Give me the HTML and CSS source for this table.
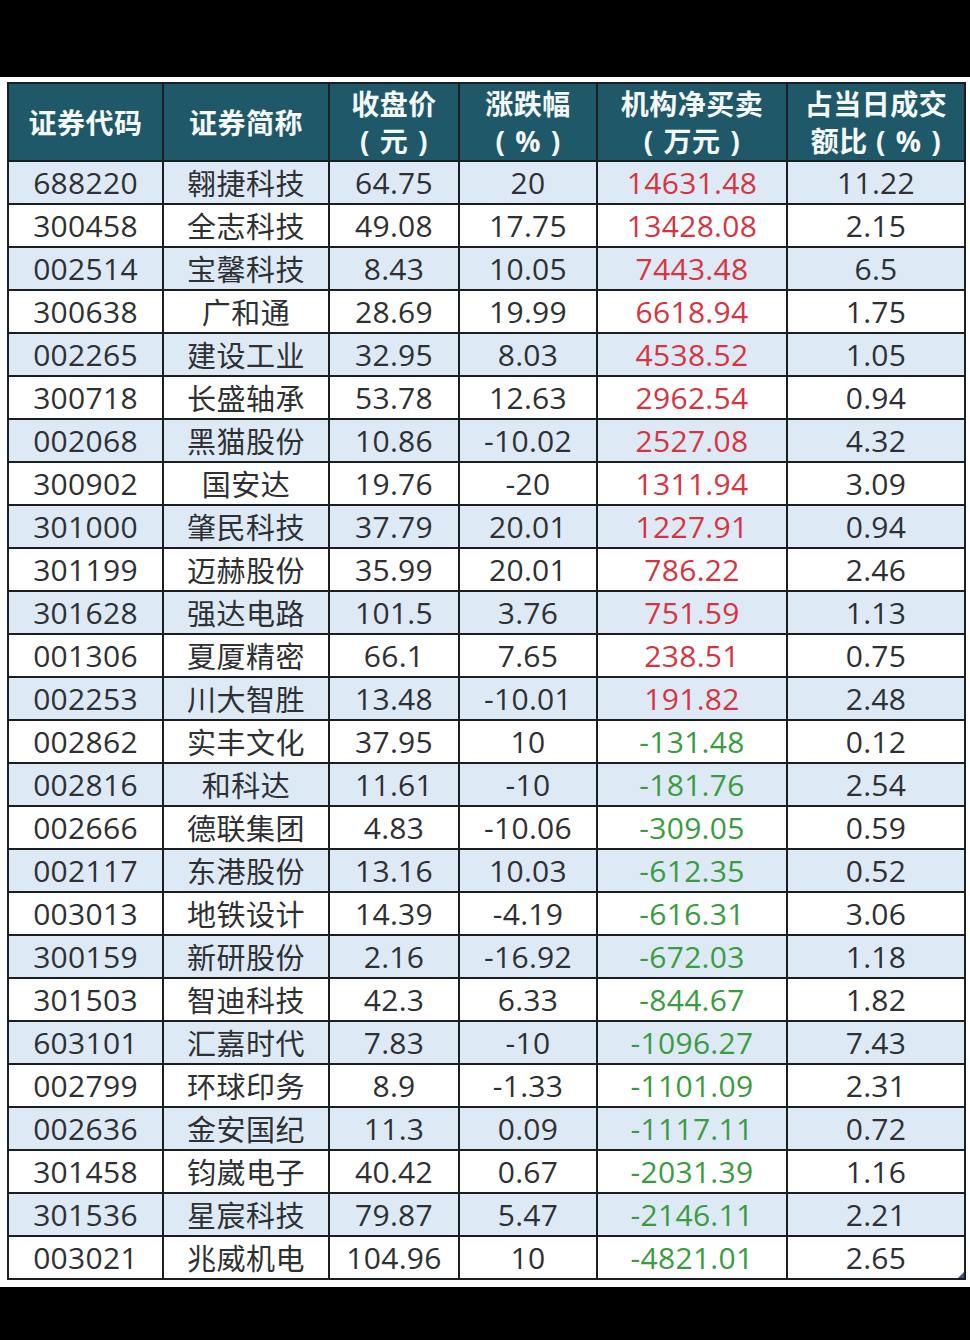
FILE: index.html
```html
<!DOCTYPE html>
<html lang="zh-CN">
<head>
<meta charset="utf-8">
<title>机构净买卖</title>
<link rel="stylesheet" href="styles.css">
</head>
<body>
<div class="topbar"></div>
<div class="sheet">
  <table class="grid">
    <colgroup>
      <col class="c1"><col class="c2"><col class="c3"><col class="c4"><col class="c5"><col class="c6">
    </colgroup>
    <thead>
      <tr>
        <th>证券代码</th>
        <th>证券简称</th>
        <th>收盘价<br><span class="unit">( 元 )</span></th>
        <th>涨跌幅<br><span class="unit">( % )</span></th>
        <th>机构净买卖<br><span class="unit">( 万元 )</span></th>
        <th>占当日成交<br>额比<span class="unit gap">( % )</span></th>
      </tr>
    </thead>
    <tbody>
      <tr><td>688220</td><td>翱捷科技</td><td>64.75</td><td>20</td><td class="up">14631.48</td><td>11.22</td></tr>
      <tr><td>300458</td><td>全志科技</td><td>49.08</td><td>17.75</td><td class="up">13428.08</td><td>2.15</td></tr>
      <tr><td>002514</td><td>宝馨科技</td><td>8.43</td><td>10.05</td><td class="up">7443.48</td><td>6.5</td></tr>
      <tr><td>300638</td><td>广和通</td><td>28.69</td><td>19.99</td><td class="up">6618.94</td><td>1.75</td></tr>
      <tr><td>002265</td><td>建设工业</td><td>32.95</td><td>8.03</td><td class="up">4538.52</td><td>1.05</td></tr>
      <tr><td>300718</td><td>长盛轴承</td><td>53.78</td><td>12.63</td><td class="up">2962.54</td><td>0.94</td></tr>
      <tr><td>002068</td><td>黑猫股份</td><td>10.86</td><td>-10.02</td><td class="up">2527.08</td><td>4.32</td></tr>
      <tr><td>300902</td><td>国安达</td><td>19.76</td><td>-20</td><td class="up">1311.94</td><td>3.09</td></tr>
      <tr><td>301000</td><td>肇民科技</td><td>37.79</td><td>20.01</td><td class="up">1227.91</td><td>0.94</td></tr>
      <tr><td>301199</td><td>迈赫股份</td><td>35.99</td><td>20.01</td><td class="up">786.22</td><td>2.46</td></tr>
      <tr><td>301628</td><td>强达电路</td><td>101.5</td><td>3.76</td><td class="up">751.59</td><td>1.13</td></tr>
      <tr><td>001306</td><td>夏厦精密</td><td>66.1</td><td>7.65</td><td class="up">238.51</td><td>0.75</td></tr>
      <tr><td>002253</td><td>川大智胜</td><td>13.48</td><td>-10.01</td><td class="up">191.82</td><td>2.48</td></tr>
      <tr><td>002862</td><td>实丰文化</td><td>37.95</td><td>10</td><td class="down">-131.48</td><td>0.12</td></tr>
      <tr><td>002816</td><td>和科达</td><td>11.61</td><td>-10</td><td class="down">-181.76</td><td>2.54</td></tr>
      <tr><td>002666</td><td>德联集团</td><td>4.83</td><td>-10.06</td><td class="down">-309.05</td><td>0.59</td></tr>
      <tr><td>002117</td><td>东港股份</td><td>13.16</td><td>10.03</td><td class="down">-612.35</td><td>0.52</td></tr>
      <tr><td>003013</td><td>地铁设计</td><td>14.39</td><td>-4.19</td><td class="down">-616.31</td><td>3.06</td></tr>
      <tr><td>300159</td><td>新研股份</td><td>2.16</td><td>-16.92</td><td class="down">-672.03</td><td>1.18</td></tr>
      <tr><td>301503</td><td>智迪科技</td><td>42.3</td><td>6.33</td><td class="down">-844.67</td><td>1.82</td></tr>
      <tr><td>603101</td><td>汇嘉时代</td><td>7.83</td><td>-10</td><td class="down">-1096.27</td><td>7.43</td></tr>
      <tr><td>002799</td><td>环球印务</td><td>8.9</td><td>-1.33</td><td class="down">-1101.09</td><td>2.31</td></tr>
      <tr><td>002636</td><td>金安国纪</td><td>11.3</td><td>0.09</td><td class="down">-1117.11</td><td>0.72</td></tr>
      <tr><td>301458</td><td>钧崴电子</td><td>40.42</td><td>0.67</td><td class="down">-2031.39</td><td>1.16</td></tr>
      <tr><td>301536</td><td>星宸科技</td><td>79.87</td><td>5.47</td><td class="down">-2146.11</td><td>2.21</td></tr>
      <tr><td>003021</td><td>兆威机电</td><td>104.96</td><td>10</td><td class="down">-4821.01</td><td class="corner">2.65</td></tr>
    </tbody>
  </table>
</div>
</body>
</html>
```
FILE: styles.css
```css
html, body {
  margin: 0;
  padding: 0;
  background: #000;
}
body {
  width: 970px;
  height: 1340px;
  overflow: hidden;
  font-family: "Open Sans", "Noto Sans CJK SC", sans-serif;
}
.topbar {
  height: 77px;
  background: #000;
}
.sheet {
  background: #fff;
  padding: 5px 6px 7px 7px;
}
.grid {
  width: 957px;
  border-collapse: collapse;
  table-layout: fixed;
}
.c1 { width: 155px; }
.c2 { width: 166px; }
.c3 { width: 130px; }
.c4 { width: 138px; }
.c5 { width: 190px; }
.c6 { width: 178px; }

.grid th,
.grid td {
  border: 2px solid #1c1f22;
  text-align: center;
  padding: 0;
  white-space: nowrap;
  overflow: hidden;
}
.grid th {
  height: 76px;
  background: #1f5868;
  color: #f4f8f9;
  font-family: "Noto Sans CJK SC", sans-serif;
  font-weight: 700;
  font-size: 28px;
  line-height: 37px;
  letter-spacing: 0.5px;
}
.grid th .unit {
  font-family: "Open Sans", "Noto Sans CJK SC", sans-serif;
  font-weight: 700;
  word-spacing: 2px;
}
.grid th .gap {
  margin-left: 8px;
}
.grid td {
  height: 41px;
  font-size: 30px;
  line-height: 41px;
  letter-spacing: 0.3px;
  color: #2e3033;
}
.grid td:nth-child(2) {
  font-family: "Noto Sans CJK SC", sans-serif;
  font-size: 29px;
  letter-spacing: 0.5px;
  font-weight: 400;
}
.grid tbody tr:nth-child(odd) td {
  background: #dde9f5;
}
.grid tbody tr:nth-child(even) td {
  background: #fff;
}
.grid td.up {
  color: #d8343f;
}
.grid td.down {
  color: #3a9c40;
}
.grid td.corner {
  position: relative;
}
.grid td.corner::after {
  content: "";
  position: absolute;
  right: 0;
  bottom: 0;
  width: 0;
  height: 0;
  border-left: 6px solid transparent;
  border-bottom: 6px solid #3d4f8f;
}
```
